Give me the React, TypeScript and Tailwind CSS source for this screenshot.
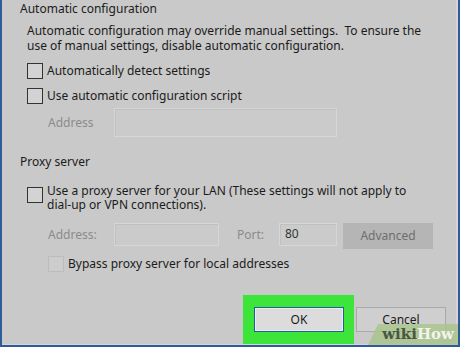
import React from 'react';

const font = { fontFamily: '"Noto Sans", "Open Sans", sans-serif' };

function Check({ disabled = false }: { disabled?: boolean }) {
    return (
        <span
            className={
                disabled
                    ? 'block w-[16px] h-[16px] shrink-0 border border-[#bcbcbc] bg-[#cdcdcd]'
                    : 'block w-[16px] h-[16px] shrink-0 border-[1.5px] border-[#333333] bg-[#d3d3d3]'
            }
        />
    );
}

function Field({ className = '', children }: { className?: string; children?: React.ReactNode }) {
    return (
        <div className={`shrink-0 border border-[#d6d6d6] bg-[#cbcbcb] shadow-[inset_1px_1px_0_#c0c0c0] ${className}`}>
            {children}
        </div>
    );
}

export default function App() {
    return (
        <div
            className="relative w-[460px] h-[347px] overflow-hidden bg-[#c9c9c9] border-l-2 border-r-2 border-b-2 border-[#2f5b9c] text-[12px] text-[#1b1b1b]"
            style={font}
        >
            <div className="h-full border-r-2 border-b border-[#d5d5d5] pl-[18px] flex flex-col">
                {/* Automatic configuration */}
                <div className="h-[18px] leading-[18px]">Automatic configuration</div>
                <p className="ml-[7px] mt-[5px] leading-[15px]">
                    Automatic configuration may override manual settings.&nbsp; To ensure the
                    <br />
                    use of manual settings, disable automatic configuration.
                </p>

                <div className="ml-[7px] mt-[8px] h-[20px] flex items-center gap-[4px]">
                    <Check />
                    <span>Automatically detect settings</span>
                </div>
                <div className="ml-[7px] mt-[5px] h-[20px] flex items-center gap-[4px]">
                    <Check />
                    <span>Use automatic configuration script</span>
                </div>
                <div className="mt-[2px] h-[29px] flex items-center">
                    <span className="ml-[28px] w-[66px] shrink-0 text-[#8b8b8b]">Address</span>
                    <Field className="w-[223px] h-[29px]" />
                </div>

                {/* Proxy server */}
                <div className="mt-[16px] h-[18px] leading-[18px]">Proxy server</div>
                <div className="ml-[7px] mt-[12px] flex items-start gap-[4px]">
                    <span className="mt-[4px] shrink-0">
                        <Check />
                    </span>
                    <span className="pt-[1px] leading-[14px]">
                        Use a proxy server for your LAN (These settings will not apply to
                        <br />
                        dial-up or VPN connections).
                    </span>
                </div>

                <div className="mt-[11px] flex items-start text-[#8b8b8b]">
                    <span className="ml-[28px] w-[66px] shrink-0 h-[23px] leading-[23px]">Address:</span>
                    <Field className="w-[105px] h-[23px]" />
                    <span className="ml-[18px] w-[42px] shrink-0 h-[23px] leading-[23px]">Port:</span>
                    <Field className="w-[58px] h-[23px] pl-[5px] leading-[19px] text-[#333333]">80</Field>
                    <div className="ml-[6px] w-[90px] shrink-0 h-[26px] bg-[#b5b5b5] flex items-center justify-center text-[#6e6e6e]">
                        Advanced
                    </div>
                </div>

                <div className="ml-[28px] mt-[5px] h-[20px] flex items-center gap-[4px] text-[#1b1b1b]">
                    <Check disabled />
                    <span>Bypass proxy server for local addresses</span>
                </div>

                {/* Buttons */}
                <div className="mt-[21px] ml-[223px] flex items-start">
                    <div className="w-[111px] h-[49px] shrink-0 bg-[#3de43a] pl-[11px] pt-[12px]">
                        <div className="w-[90px] h-[25px] border border-[#1f5da6] bg-[#dcdcdc] shadow-[inset_0_0_0_1px_#eeeeee] flex items-center justify-center">
                            OK
                        </div>
                    </div>
                    <div className="ml-[2px] mt-[12px] w-[90px] h-[25px] shrink-0 border border-[#a9a9a9] bg-[#cfcfcf] flex items-center justify-center">
                        Cancel
                    </div>
                </div>
            </div>

            {/* wikiHow watermark */}
            <div
                className="absolute right-0 bottom-0 w-[90px] h-[21px] bg-[#a8c48c]/80 [clip-path:polygon(10px_0,100%_0,100%_100%,0_100%)] flex items-center justify-end pr-[4px] font-bold text-[15px] leading-none"
                style={{ fontFamily: '"DejaVu Serif", "Liberation Serif", serif' }}
            >
                <span className="text-[#4a5640]">wiki</span>
                <span className="text-[#f1f4ec]">How</span>
            </div>
        </div>
    );
}
